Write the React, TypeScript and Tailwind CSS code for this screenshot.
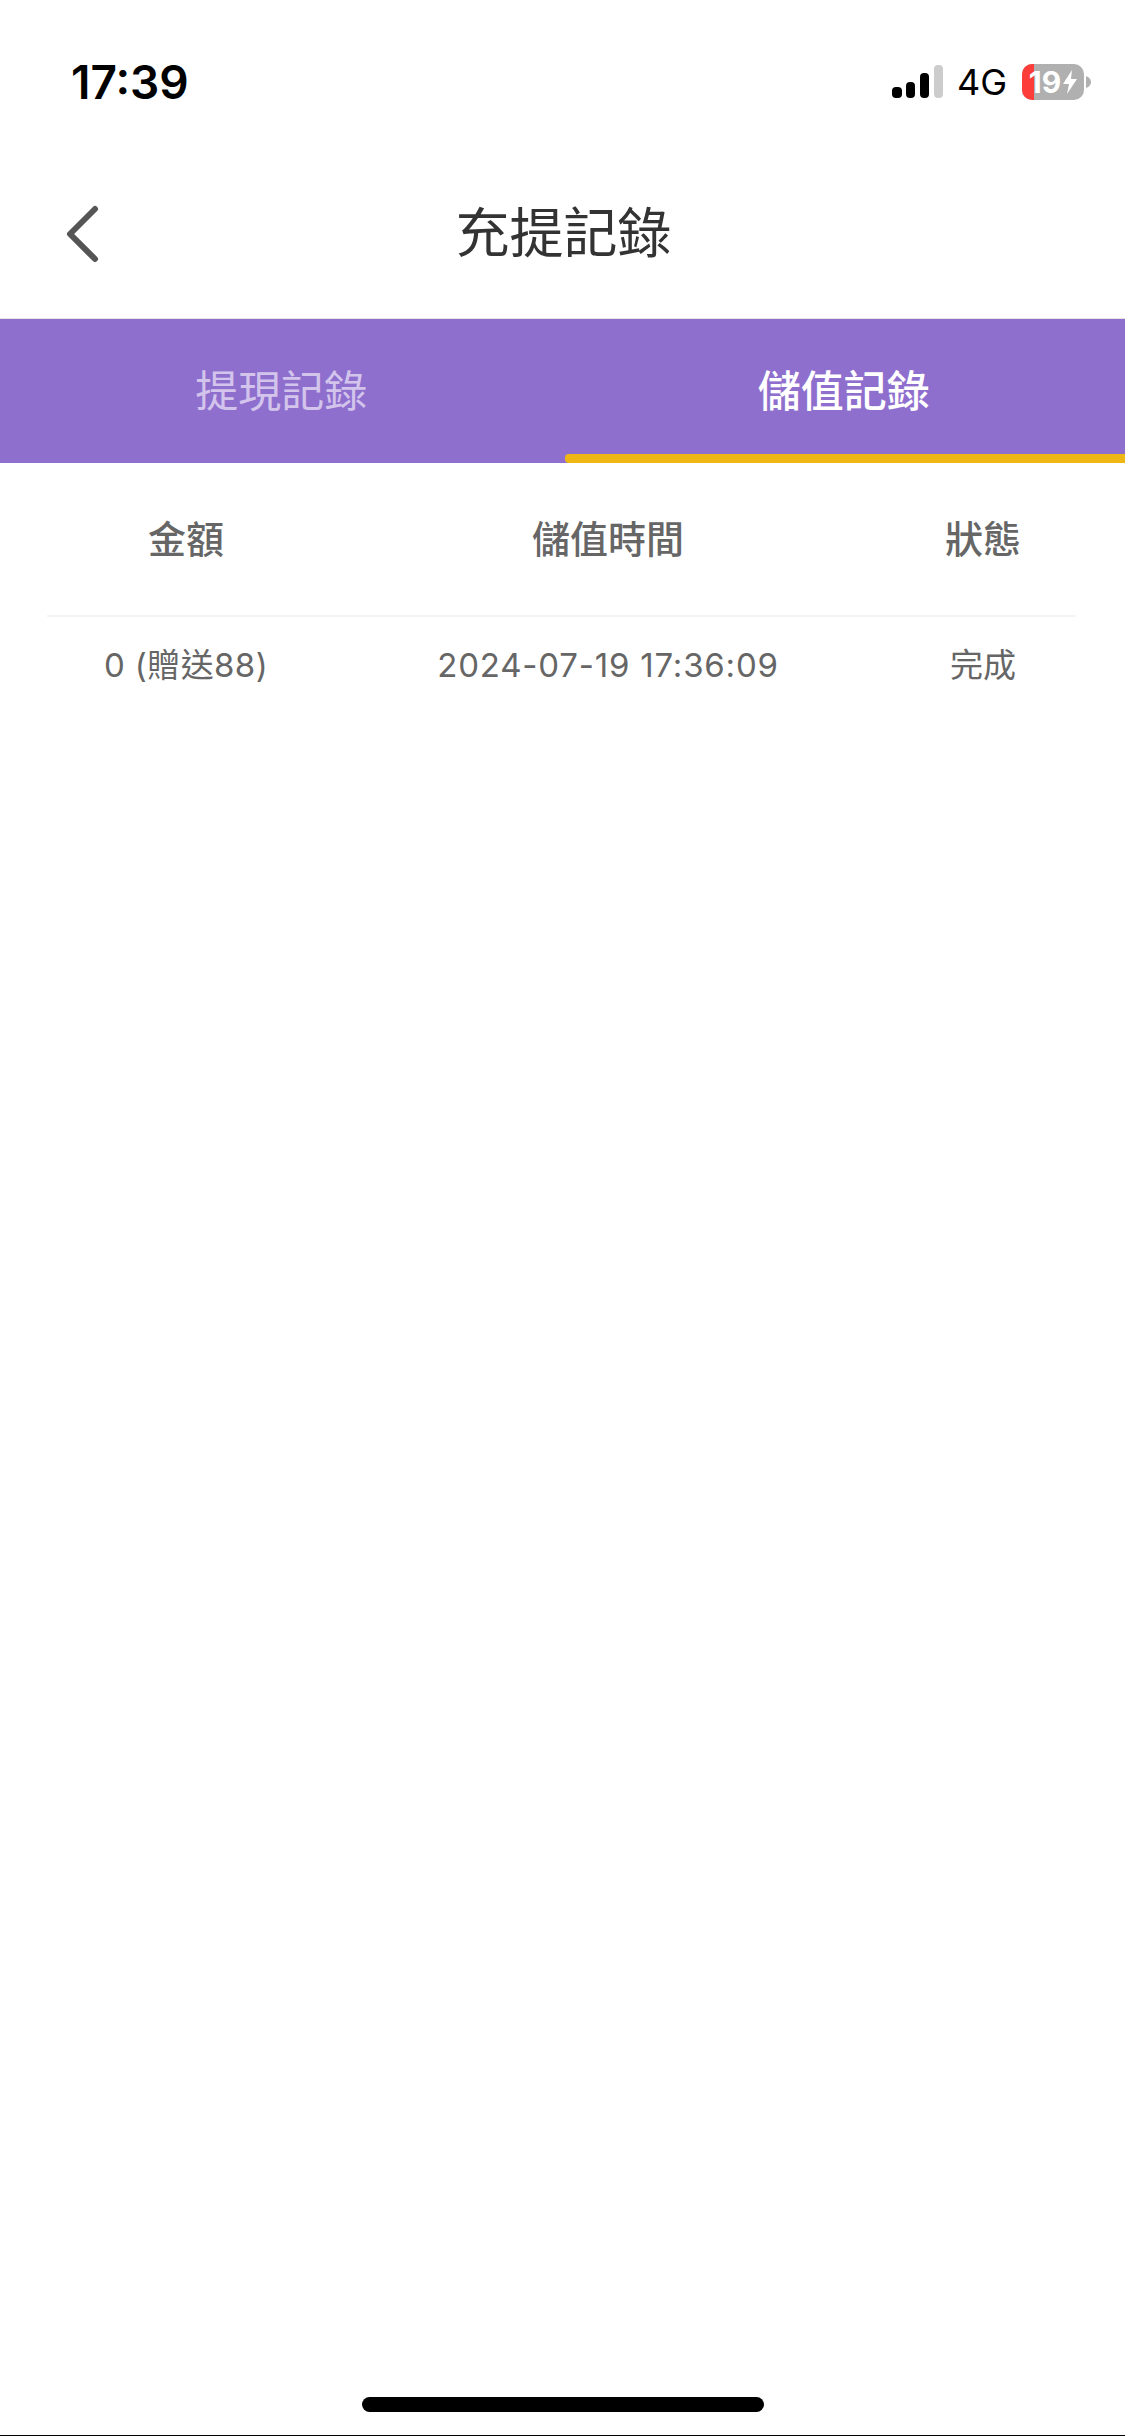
import React from 'react'

const cjk = { fontFamily: 'Inter, "Noto Sans CJK TC", sans-serif' }

const SignalBars = () => (
  <svg width="52" height="34" viewBox="0 0 52 34" className="block">
    <rect x="0" y="22" width="10" height="11" rx="4" fill="#000" />
    <rect x="14" y="17" width="9" height="16" rx="4" fill="#000" />
    <rect x="28" y="8" width="9" height="25" rx="4" fill="#000" />
    <rect x="42" y="0" width="9" height="33" rx="4" fill="#cccccc" />
  </svg>
)

const Battery = () => (
  <div className="flex items-center gap-[2px]">
    <div className="relative w-[62px] h-[36px] rounded-[10px] bg-[#b0b0b0] overflow-hidden flex items-center justify-center gap-[2px]">
      <div className="absolute left-0 top-0 bottom-0 w-[12px] bg-[#fc3d39]" />
      <span
        className="relative text-white text-[30px] font-bold leading-[36px]"
        style={{ fontFamily: 'Inter, sans-serif' }}
      >
        19
      </span>
      <svg width="14" height="24" viewBox="0 0 14 24" className="relative shrink-0">
        <path d="M9 0 L0 14 L6 14 L4 24 L14 9 L8 9 Z" fill="#fff" />
      </svg>
    </div>
    <svg width="5" height="12" viewBox="0 0 5 12">
      <path d="M0 0 Q5 2 5 6 Q5 10 0 12 Z" fill="#b0b0b0" />
    </svg>
  </div>
)

const App = () => {
  return (
    <div className="w-[1125px] h-[2436px] bg-white flex flex-col overflow-hidden" style={cjk}>
      {/* status bar */}
      <div className="h-[100px] pl-[71px] pr-[34px] pt-[56px] flex items-start justify-between">
        <span className="text-[46px] leading-[52px] font-semibold text-black">17:39</span>
        <div className="flex items-center pt-[8px]">
          <SignalBars />
          <span className="ml-[13px] text-[36px] leading-[36px] text-black font-normal">4G</span>
          <div className="ml-[15px]">
            <Battery />
          </div>
        </div>
      </div>

      {/* nav */}
      <div className="h-[218px] relative flex items-center justify-center">
        <svg
          width="36"
          height="58"
          viewBox="0 0 36 58"
          className="absolute left-[65px] top-[105px]"
        >
          <path
            d="M30 4 L5 29 L30 54"
            fill="none"
            stroke="#555555"
            strokeWidth="6"
            strokeLinecap="round"
            strokeLinejoin="round"
          />
        </svg>
        <h1 className="text-[54px] leading-none font-normal text-[#333333] mt-[50px] ml-[2px]">充提記錄</h1>
      </div>

      {/* tabs */}
      <div className="h-[145px] bg-[#8f6fce] border-t border-[#e6e2e2] grid grid-cols-2">
        <div className="flex items-center justify-center text-[43px] text-[#d3c4ec]">提現記錄</div>
        <div className="relative flex items-center justify-center text-[43px] font-medium text-white">
          儲值記錄
          <div className="absolute left-[2px] right-0 bottom-0 h-[9px] rounded-l-[4px] bg-[#efb714]" />
        </div>
      </div>

      {/* table */}
      <div className="ml-[47px] mr-[49px]">
        <div className="h-[154px] grid grid-cols-[278px_566px_184px] items-center border-b-2 border-[#f4f4f5] text-[38px] font-medium text-[#666666] text-center">
          <div>金額</div>
          <div>儲值時間</div>
          <div>狀態</div>
        </div>
        <div className="h-[98px] grid grid-cols-[278px_566px_184px] items-center text-[33px] text-[#666666] text-center">
          <div className="tracking-[0.4px]">0 (贈送88)</div>
          <div className="tracking-[0.8px]">2024-07-19 17:36:09</div>
          <div>完成</div>
        </div>
      </div>

      {/* home indicator */}
      <div className="mt-auto flex flex-col items-center">
        <div className="w-[402px] h-[15px] rounded-full bg-black" />
        <div className="mt-[23px] w-full h-px bg-black" />
      </div>
    </div>
  )
}

export default App
